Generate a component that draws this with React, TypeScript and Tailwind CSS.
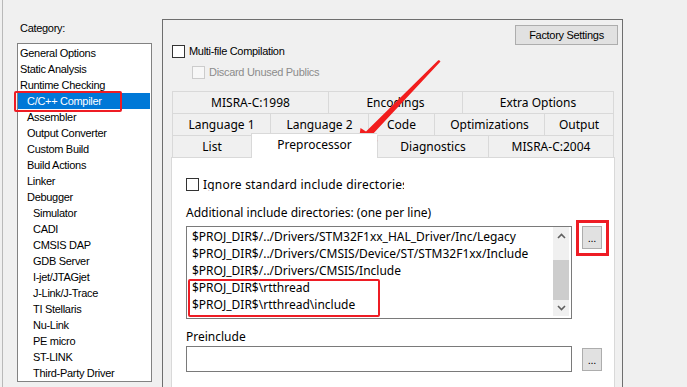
const ui = "font-['Liberation_Sans',Arial,sans-serif] text-[11px] tracking-[-0.3px]";
const yh = "font-['Noto_Sans','Noto_Sans_CJK_SC',sans-serif] text-[12px]";

const categories: [string, number][] = [
  ['General Options', 0],
  ['Static Analysis', 0],
  ['Runtime Checking', 0],
  ['C/C++ Compiler', 1],
  ['Assembler', 1],
  ['Output Converter', 1],
  ['Custom Build', 1],
  ['Build Actions', 1],
  ['Linker', 1],
  ['Debugger', 1],
  ['Simulator', 2],
  ['CADI', 2],
  ['CMSIS DAP', 2],
  ['GDB Server', 2],
  ['I-jet/JTAGjet', 2],
  ['J-Link/J-Trace', 2],
  ['TI Stellaris', 2],
  ['Nu-Link', 2],
  ['PE micro', 2],
  ['ST-LINK', 2],
  ['Third-Party Driver', 2],
];

const tabRows: [string, number][][] = [
  [['MISRA-C:1998', 156], ['Encodings', 134], ['Extra Options', 151]],
  [['Language 1', 98], ['Language 2', 98], ['Code', 66], ['Optimizations', 110], ['Output', 69]],
  [['List', 79], ['Preprocessor', 126], ['Diagnostics', 111], ['MISRA-C:2004', 125]],
];

const includes = [
  '$PROJ_DIR$/../Drivers/STM32F1xx_HAL_Driver/Inc/Legacy',
  '$PROJ_DIR$/../Drivers/CMSIS/Device/ST/STM32F1xx/Include',
  '$PROJ_DIR$/../Drivers/CMSIS/Include',
  '$PROJ_DIR$\\rtthread',
  '$PROJ_DIR$\\rtthread\\include',
];

const pad = ['pl-[2px]', 'pl-[9px]', 'pl-[15px]'];

function Check({ label, disabled }: { label: string; disabled?: boolean }) {
  return (
    <div className="flex h-[13px] items-center gap-[4px]">
      <span
        className={
          disabled
            ? 'h-[13px] w-[13px] border border-[#cccccc] bg-[#f7f7f7]'
            : 'h-[13px] w-[13px] border border-[#333333] bg-white'
        }
      />
      <span className={`${ui} whitespace-nowrap ${disabled ? 'text-[#8c8c8c]' : 'text-black'}`}>{label}</span>
    </div>
  );
}

function DotsButton() {
  return (
    <div className={`${ui} flex h-[23px] w-[20px] items-center justify-center border border-[#adadad] bg-[#e1e1e1] pt-[2px] text-black`}>
      ...
    </div>
  );
}

function Chevron({ up }: { up?: boolean }) {
  return (
    <svg width="9" height="6" viewBox="0 0 9 6">
      <polyline
        points={up ? '1,5 4.5,1.5 8,5' : '1,1 4.5,4.5 8,1'}
        fill="none"
        stroke="#606060"
        strokeWidth="1.6"
      />
    </svg>
  );
}

export default function App() {
  return (
    <div className="relative flex h-[387px] w-[687px] overflow-hidden bg-[#f0f0f0] text-black">
      {/* category column */}
      <div className="ml-[2px] h-full w-[160px] shrink-0 border-l border-[#b9b9b9]">
        <div className={`${ui} ml-[17px] mt-[22px] h-[13px] leading-[13px]`}>Category:</div>
        <div className="ml-[14px] mt-[8px] w-[135px] border border-[#828282] bg-white pt-[1px]">
          {categories.map(([name, lvl]) => (
            <div
              key={name}
              className={`${ui} mr-[1px] h-[16px] whitespace-nowrap leading-[16px] ${pad[lvl]} ${
                name === 'C/C++ Compiler' ? 'bg-[#0078d7] text-white' : ''
              }`}
            >
              {name}
            </div>
          ))}
        </div>
      </div>

      {/* options panel */}
      <div className="mt-[19px] w-[461px] shrink-0 border border-b-0 border-[#6e6e6e]">
        <div className="flex justify-between pl-[9px] pr-[4px] pt-[5px]">
          <div className="pt-[20px]">
            <Check label="Multi-file Compilation" />
            <div className="ml-[20px] mt-[8px]">
              <Check label="Discard Unused Publics" disabled />
            </div>
          </div>
          <button className={`${ui} h-[20px] w-[103px] border border-[#adadad] bg-[#e1e1e1] text-black`}>
            Factory Settings
          </button>
        </div>

        <div className="ml-[8px] mt-[12px]">
          {tabRows.map((row, ri) => (
            <div key={ri} className={`ml-[1px] flex h-[22px] ${ri === 2 ? 'items-end' : ''}`}>
              {row.map(([name, w], i) => {
                const sel = name === 'Preprocessor';
                const last = i === row.length - 1;
                return (
                  <div
                    key={name}
                    style={{ width: last ? w + 1 : w }}
                    className={`${yh} flex shrink-0 items-center justify-center whitespace-nowrap border-l border-t border-[#d9d9d9] ${
                      last ? 'border-r' : ''
                    } ${sel ? 'relative z-10 -mb-[1px] h-[25px] bg-white pb-[2px]' : 'h-[22px] bg-[#f0f0f0]'}`}
                  >
                    {name}
                  </div>
                );
              })}
            </div>
          ))}

          {/* tab page */}
          <div className="h-[240px] w-[444px] border border-b-0 border-[#d9d9d9] bg-white pl-[14px] pt-[20px]">
            <div className="flex h-[13px] items-center gap-[4px]">
              <span className="h-[13px] w-[13px] shrink-0 border border-[#333333] bg-white" />
              <span className={`${yh} w-[201px] overflow-hidden whitespace-nowrap leading-[13px] tracking-[0.2px]`}>
                Ignore standard include directories
              </span>
            </div>

            <div className={`${yh} mt-[13px] h-[17px] leading-[17px]`}>
              Additional include directories: (one per line)
            </div>

            <div className="mt-[5px] flex items-start gap-[10px]">
              <div className="flex h-[93px] w-[386px] border border-[#7a7a7a] bg-white">
                <div className={`${yh} flex-1 overflow-hidden whitespace-nowrap pl-[5px] pt-[1px] leading-[17px]`}>
                  {includes.map((l) => (
                    <div key={l}>{l}</div>
                  ))}
                </div>
                <div className="mr-[2px] flex h-[89px] w-[16px] flex-col bg-[#f0f0f0]">
                  <div className="flex h-[17px] items-center justify-center pt-[1px]">
                    <Chevron up />
                  </div>
                  <div className="h-[16px]" />
                  <div className="h-[40px] bg-[#cdcdcd]" />
                  <div className="flex h-[16px] items-center justify-center">
                    <Chevron />
                  </div>
                </div>
              </div>
              <DotsButton />
            </div>

            <div className={`${yh} mt-[9px] h-[17px] leading-[17px]`}>Preinclude</div>
            <div className="mt-[1px] flex items-center gap-[10px]">
              <div className="h-[26px] w-[386px] border border-[#7a7a7a] bg-white" />
              <DotsButton />
            </div>
          </div>
        </div>
      </div>

      {/* annotations */}
      <div className="absolute left-[14px] top-[91px] h-[21px] w-[108px] rounded-[2px] border-[2.5px] border-[#ee1c24]" />
      <div className="absolute left-[576px] top-[220px] h-[36px] w-[33px] border-[3px] border-[#ee1c24]" />
      <div className="absolute left-[188px] top-[279px] h-[38px] w-[192px] rounded-[2px] border-[2.5px] border-[#ee1c24]" />
      <svg className="absolute left-0 top-0" width="687" height="387" viewBox="0 0 687 387">
        <polygon
          points="439,60 440.5,61.5 371,136 377.5,141 358,147 360.5,128 366,131.5 438,60.5"
          fill="#f21d1d"
        />
      </svg>
    </div>
  );
}
